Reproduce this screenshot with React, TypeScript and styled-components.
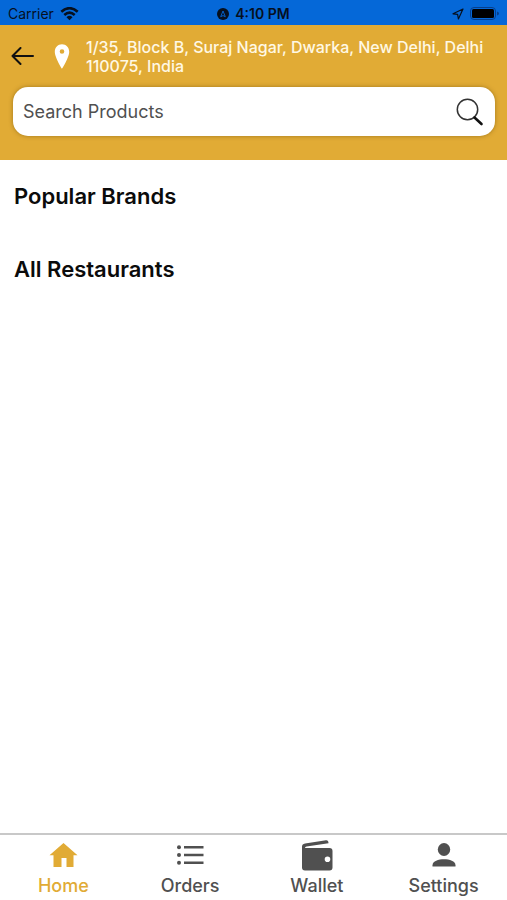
import React from "react";
import styled, { createGlobalStyle } from "styled-components";

const GOLD = "#e1ab35";
const BLUE = "#0568d8";
const GREY = "#505050";

const GlobalStyle = createGlobalStyle`
  *, *::before, *::after { box-sizing: border-box; }
  body {
    margin: 0;
    background: #fff;
    color: #0b0b0b;
    font-family: Inter, "Liberation Sans", sans-serif;
  }
`;

const Screen = styled.div`
  display: flex;
  flex-direction: column;
  min-height: 100vh;
`;

const StatusBar = styled.div`
  display: grid;
  grid-template-columns: 1fr auto 1fr;
  align-items: center;
  height: 25px;
  padding: 2px 8px 0;
  background: ${BLUE};
  color: #06101f;
  font-size: 14px;
  line-height: 16px;
`;

const StatusGroup = styled.div<{ $end?: boolean }>`
  display: flex;
  align-items: center;
  justify-content: ${(p) => (p.$end ? "flex-end" : "flex-start")};
  gap: 6px;
`;

const Clock = styled.span`
  font-weight: 600;
`;

const Header = styled.header`
  padding: 13px 12px 24px 13px;
  background: ${GOLD};
`;

const LocationRow = styled.div`
  display: flex;
  align-items: center;
  min-height: 38px;
  margin-bottom: 11px;
`;

const BackButton = styled.button`
  display: flex;
  margin-left: -2px;
  padding: 0;
  border: 0;
  background: none;
  color: #111;
  cursor: pointer;
`;

const Pin = styled.svg`
  flex: none;
  margin: 0 16px 0 19px;
`;

const Address = styled.p`
  flex: 1;
  margin: 0;
  color: #fff8e4;
  font-size: 16px;
  font-weight: 500;
  line-height: 19px;
`;

const SearchBox = styled.form`
  display: flex;
  align-items: center;
  height: 49px;
  padding: 0 11px 0 10px;
  border-radius: 15px;
  background: #fff;
  box-shadow: 0 0 4px rgba(100, 70, 0, 0.5);
`;

const SearchInput = styled.input`
  flex: 1;
  min-width: 0;
  padding: 0;
  border: 0;
  outline: 0;
  background: none;
  color: ${GREY};
  font: inherit;
  font-size: 18px;
  line-height: 24px;

  &::placeholder {
    color: ${GREY};
    opacity: 1;
  }
`;

const SearchButton = styled.button`
  display: flex;
  padding: 0;
  border: 0;
  background: none;
  cursor: pointer;
`;

const Content = styled.main`
  display: flex;
  flex: 1;
  flex-direction: column;
  gap: 45px;
  padding: 22px 14px;
`;

const SectionTitle = styled.h2`
  margin: 0;
  font-size: 22px;
  font-weight: 600;
  line-height: 28px;
`;

const TabBar = styled.nav`
  display: grid;
  grid-template-columns: repeat(4, 1fr);
  height: 67px;
  border-top: 2px solid #c8c8c8;
  background: #fff;
`;

const Tab = styled.a<{ $active?: boolean }>`
  display: flex;
  flex-direction: column;
  align-items: center;
  gap: 2px;
  padding-top: 3px;
  color: ${(p) => (p.$active ? GOLD : GREY)};
  font-size: 18px;
  font-weight: 500;
  line-height: 24px;
  text-decoration: none;
`;

const TabIcon = styled.svg`
  display: block;
  width: 34px;
  height: 34px;
  fill: currentColor;
`;

const tabs = [
  { label: "Home", icon: <path d="M17.500 5L31.500 17.300H27.500V29H20.500V20H15.500V29H7.500V17.300H3.500Z" /> },
  {
    label: "Orders",
    icon: (
      <>
        <circle cx="6" cy="9.300" r="2" />
        <circle cx="6" cy="17" r="2" />
        <circle cx="6" cy="24.700" r="2" />
        <path d="M11 8h19.500v2.600H11zM11 15.700h19.500v2.600H11zM11 23.400h19.500v2.600H11z" />
      </>
    ),
  },
  {
    label: "Wallet",
    icon: (
      <path
        fillRule="evenodd"
        d="M2 8.500Q2 6 5 5.500L26 2.200Q28.500 2 28.500 5.200L6.500 8.400Q5 8.800 5 10H29.500Q32.500 10 32.500 13V29.500Q32.500 32.500 29.500 32.500H5Q2 32.500 2 29.500ZM27.500 18.400a2.800 2.800 0 1 0 0 5.600a2.800 2.800 0 1 0 0-5.600Z"
      />
    ),
  },
  {
    label: "Settings",
    icon: (
      <>
        <ellipse cx="17" cy="11.500" rx="6.200" ry="6.500" />
        <path d="M5.500 28.500v-1.200c0-4.200 6-6 11.500-6s11.500 1.800 11.500 6v1.200z" />
      </>
    ),
  },
];

export default function App() {
  return (
    <Screen>
      <GlobalStyle />
      <StatusBar>
        <StatusGroup>
          <span>Carrier</span>
          <svg width="19" height="14" viewBox="0 0 19 14" fill="none" stroke="currentColor" strokeWidth="2.600" aria-hidden="true">
            <path d="M1.300 4.800Q9.500-2.400 17.700 4.800M4.300 8Q9.500 3.400 14.700 8" />
            <path d="M9.500 13.300L6.500 10.200Q9.500 7.500 12.500 10.200Z" fill="currentColor" stroke="none" />
          </svg>
        </StatusGroup>
        <StatusGroup>
          <svg width="12" height="12" viewBox="0 0 12 12" aria-hidden="true">
            <circle cx="6" cy="6" r="6" fill="currentColor" />
            <path d="M6 3L3.700 8.700L6 7.600L8.300 8.700Z" fill="none" stroke={BLUE} strokeWidth="0.900" />
          </svg>
          <Clock>4:10 PM</Clock>
        </StatusGroup>
        <StatusGroup $end>
          <svg width="12" height="12" viewBox="0 0 12 12" fill="none" stroke="currentColor" strokeWidth="1.200" strokeLinejoin="round" aria-hidden="true">
            <path d="M11 1L1 5.800L5.600 6.400L6.400 11Z" />
          </svg>
          <svg width="29" height="13" viewBox="0 0 29 13" aria-hidden="true">
            <rect x="0.500" y="0.500" width="25" height="12" rx="3.500" fill="none" stroke="#063f8c" />
            <rect x="2" y="2" width="22" height="9" rx="1.500" fill="#000" />
            <path d="M27 4.500q2 .6 2 2t-2 2z" fill="#063f8c" />
          </svg>
        </StatusGroup>
      </StatusBar>

      <Header>
        <LocationRow>
          <BackButton type="button" aria-label="Back">
            <svg width="24" height="20" viewBox="0 0 24 20" fill="none" stroke="currentColor" strokeWidth="2" strokeLinecap="round" strokeLinejoin="round">
              <path d="M22 9H1.500M9.500 1L1.500 9L9.500 17" />
            </svg>
          </BackButton>
          <Pin width="16" height="26" viewBox="0 0 16 26" aria-hidden="true">
            <path
              fill="#fff"
              fillRule="evenodd"
              d="M8 .3C3.800.3.8 3.500.8 7.700C.8 13.500 8 24.700 8 24.700S15.200 13.500 15.200 7.700C15.200 3.500 12.200.3 8 .3ZM8 5.200a2.300 2.300 0 1 1 0 4.600a2.300 2.300 0 1 1 0-4.600Z"
            />
          </Pin>
          <Address>1/35, Block B, Suraj Nagar, Dwarka, New Delhi, Delhi 110075, India</Address>
        </LocationRow>
        <SearchBox role="search" onSubmit={(e) => e.preventDefault()}>
          <SearchInput type="text" placeholder="Search Products" aria-label="Search Products" />
          <SearchButton type="submit" aria-label="Search">
            <svg width="28" height="28" viewBox="0 0 28 28" fill="none">
              <circle cx="11.500" cy="11.500" r="10.200" stroke="#333" strokeWidth="1.500" />
              <path d="M18.500 19.500L25.500 26" stroke="#111" strokeWidth="2.600" strokeLinecap="round" />
            </svg>
          </SearchButton>
        </SearchBox>
      </Header>

      <Content>
        <SectionTitle>Popular Brands</SectionTitle>
        <SectionTitle>All Restaurants</SectionTitle>
      </Content>

      <TabBar aria-label="Main">
        {tabs.map(({ label, icon }) => (
          <Tab key={label} href={`#${label.toLowerCase()}`} $active={label === "Home"} aria-current={label === "Home" ? "page" : undefined}>
            <TabIcon viewBox="0 0 34 34" aria-hidden="true">
              {icon}
            </TabIcon>
            {label}
          </Tab>
        ))}
      </TabBar>
    </Screen>
  );
}
